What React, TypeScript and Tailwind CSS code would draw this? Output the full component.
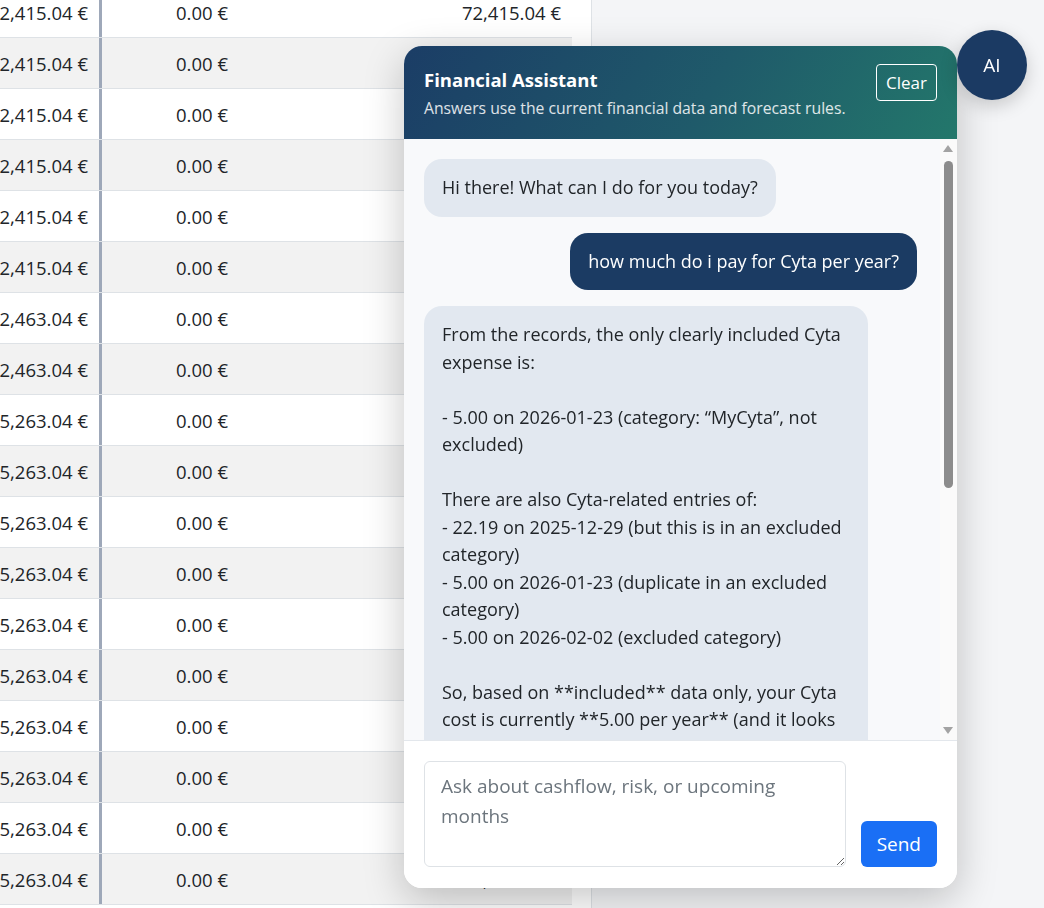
import React, { useState } from 'react';

type Row = { balance: string; change: string; total: string };

const rows: Row[] = [
  ...Array(6).fill({ balance: '72,415.04 €', change: '0.00 €', total: '72,415.04 €' }),
  ...Array(2).fill({ balance: '72,463.04 €', change: '0.00 €', total: '72,463.04 €' }),
  ...Array(10).fill({ balance: '75,263.04 €', change: '0.00 €', total: '75,263.04 €' }),
];

type Message = { role: 'bot' | 'user'; text: string };

const initialMessages: Message[] = [
  { role: 'bot', text: 'Hi there! What can I do for you today?' },
  { role: 'user', text: 'how much do i pay for Cyta per year?' },
  {
    role: 'bot',
    text:
      'From the records, the only clearly included Cyta expense is:\n\n' +
      '- 5.00 on 2026-01-23 (category: “MyCyta”, not excluded)\n\n' +
      'There are also Cyta-related entries of:\n' +
      '- 22.19 on 2025-12-29 (but this is in an excluded category)\n' +
      '- 5.00 on 2026-01-23 (duplicate in an excluded category)\n' +
      '- 5.00 on 2026-02-02 (excluded category)\n\n' +
      'So, based on **included** data only, your Cyta cost is currently **5.00 per year** (and it looks like a one-off charge so far, not a recurring monthly fee).',
  },
];

const font = { fontFamily: '"Open Sans", "Noto Sans", sans-serif' };

// forecast table behind the assistant
const ForecastTable = () => (
  <div className="w-[592px] shrink-0 bg-white border-r border-[#dee2e6] overflow-hidden">
    <div className="-mt-[13px] w-[572px]">
      {rows.map((r, i) => (
        <div
          key={i}
          className={`flex h-[51px] border-b border-[#dee2e6] text-[18.5px] text-[#212529] ${i % 2 === 1 ? 'bg-[#f2f2f2]' : 'bg-white'}`}
        >
          <div className="w-[102px] shrink-0 flex items-center justify-end pr-[11px] pt-[2px] border-r-[3px] border-[#9ea8b9] overflow-hidden whitespace-nowrap">
            <span>{r.balance}</span>
          </div>
          <div className="w-[138px] shrink-0 flex items-center justify-end pr-3 pt-[2px] whitespace-nowrap">{r.change}</div>
          <div className="flex-1 flex items-center justify-end pr-[11px] pt-[2px] whitespace-nowrap">{r.total}</div>
        </div>
      ))}
    </div>
  </div>
);

const Scrollbar = () => (
  <div className="w-[17px] shrink-0 bg-[#fafafa] flex flex-col items-center pt-[6px] pb-[6px] pr-[1px]">
    <svg width="10" height="7" viewBox="0 0 10 7">
      <path d="M5 0 L10 7 L0 7 Z" fill="#a3a3a3" />
    </svg>
    <div className="mt-[9px] w-[9px] h-[327px] rounded-full bg-[#8c8c8c]" />
    <div className="flex-1" />
    <svg width="10" height="7" viewBox="0 0 10 7">
      <path d="M0 0 L10 0 L5 7 Z" fill="#a3a3a3" />
    </svg>
  </div>
);

const ChatPanel = () => {
  const [messages, setMessages] = useState<Message[]>(initialMessages);
  const [draft, setDraft] = useState('');

  const send = () => {
    if (!draft.trim()) return;
    setMessages([...messages, { role: 'user', text: draft }]);
    setDraft('');
  };

  return (
    <div
      className="fixed top-[46px] right-[87px] w-[553px] h-[842px] bg-white rounded-[18px] overflow-hidden flex flex-col shadow-[0_12px_40px_rgba(0,0,0,0.22)]"
      style={font}
    >
      {/* Header */}
      <div className="h-[93px] shrink-0 flex items-start justify-between px-5 pt-[18px] bg-[linear-gradient(120deg,#1b3d66_0%,#1f5a6a_55%,#23776b_100%)] text-white">
        <div>
          <h2 className="text-[18.5px] font-bold leading-[32px]">Financial Assistant</h2>
          <p className="text-[15.75px] leading-[25px] text-white/85">Answers use the current financial data and forecast rules.</p>
        </div>
        <button
          onClick={() => setMessages(initialMessages.slice(0, 1))}
          className="h-[37px] px-[9px] border border-white rounded-[4px] text-[17px] text-white"
        >
          Clear
        </button>
      </div>

      {/* Conversation */}
      <div className="flex-1 flex min-h-0 bg-[#f8f9fb]">
        <div className="flex-1 overflow-hidden pl-5 pr-[23px] py-5 flex flex-col gap-4">
          {messages.map((m, i) => (
            <div key={i} className={`flex ${m.role === 'user' ? 'justify-end' : 'justify-start'}`}>
              <div
                className={`max-w-[90%] px-[18px] py-[15px] rounded-[18px] text-[18px] leading-[27.5px] whitespace-pre-wrap ${
                  m.role === 'user' ? 'bg-[#1b3b63] text-white' : 'bg-[#e2e8f0] text-[#212529]'
                }`}
              >
                {m.text}
              </div>
            </div>
          ))}
        </div>
        <Scrollbar />
      </div>

      {/* Composer */}
      <div className="shrink-0 border-t border-[#e3e7ec] bg-white px-5 pt-5 pb-[21px] flex items-end gap-[15px]">
        <textarea
          value={draft}
          onChange={(e) => setDraft(e.target.value)}
          placeholder="Ask about cashflow, risk, or upcoming months"
          className="flex-1 h-[106px] border border-[#dee2e6] rounded-[6px] px-4 py-[9px] text-[19px] leading-[30px] text-[#212529] placeholder:text-[#6c757d] outline-none"
          style={font}
        />
        <button
          onClick={send}
          className="h-[46px] px-4 rounded-[6px] bg-[#1a6ff5] text-white text-[19px]"
          style={font}
        >
          Send
        </button>
      </div>
    </div>
  );
};

export default function App() {
  return (
    <div className="h-[908px] w-full flex bg-[#f4f5f7] overflow-hidden" style={font}>
      <ForecastTable />
      <div className="flex-1" />
      <ChatPanel />
      <button className="fixed top-[30px] right-[17px] w-[70px] h-[70px] rounded-full bg-[#1b3a63] text-white text-[19px] shadow-[0_6px_18px_rgba(0,0,0,0.18)]">
        AI
      </button>
    </div>
  );
}
